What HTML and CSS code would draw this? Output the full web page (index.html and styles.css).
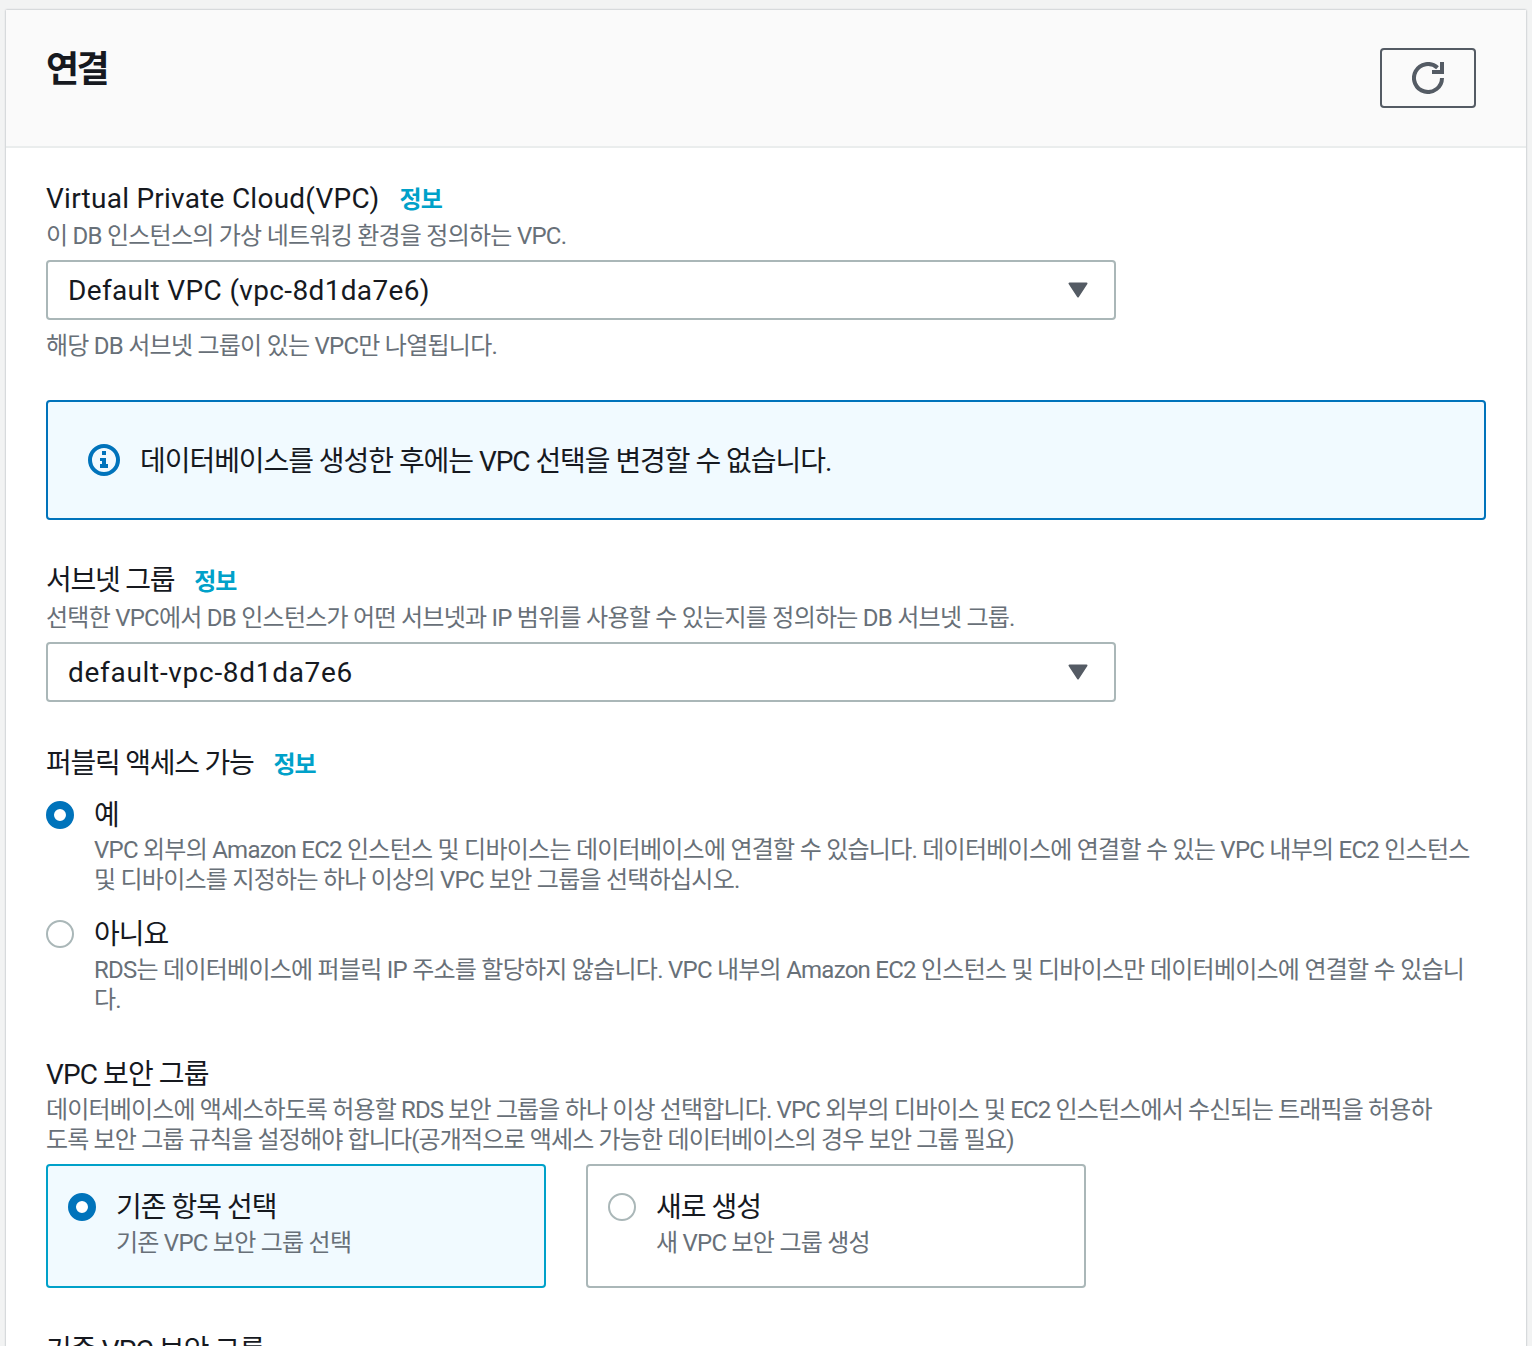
FILE: index.html
```html
<!DOCTYPE html>
<html lang="ko">
<head>
<meta charset="utf-8">
<title>연결</title>
<link rel="stylesheet" href="styles.css">
</head>
<body>
<section class="panel">
  <header class="panel-header">
    <h2 class="panel-title">연결</h2>
    <button class="refresh" type="button" aria-label="새로 고침">
      <svg width="32" height="32" viewBox="0 0 32 32" fill="none">
        <path d="M30 16A14 14 0 1 1 25.500 5.700" stroke="#545b64" stroke-width="4"/>
        <path d="M20 10H30V0" stroke="#545b64" stroke-width="4"/>
      </svg>
    </button>
  </header>
  <div class="panel-body">
    <div class="field f-vpc">
      <div class="label latin">Virtual Private Cloud(VPC)<a class="info">정보</a></div>
      <p class="desc">이 DB 인스턴스의 가상 네트워킹 환경을 정의하는 VPC.</p>
      <div class="select"><span>Default VPC (vpc-8d1da7e6)</span><svg class="caret" width="20" height="16" viewBox="0 0 20 16"><path d="M1.500 1.500H18.500L10 14.500Z" fill="#545b64" stroke="#545b64" stroke-width="2" stroke-linejoin="round"/></svg></div>
      <p class="desc hint">해당 DB 서브넷 그룹이 있는 VPC만 나열됩니다.</p>
    </div>

    <div class="alert">
      <svg width="32" height="32" viewBox="0 0 32 32" fill="none">
        <circle cx="16" cy="16" r="14" stroke="#0073bb" stroke-width="4"/>
        <rect x="14" y="7" width="4" height="4" fill="#0073bb"/>
        <path d="M12 14H18V20H20V24H12V20H14V17H12Z" fill="#0073bb"/>
      </svg>
      <span class="alert-text">데이터베이스를 생성한 후에는 VPC 선택을 변경할 수 없습니다.</span>
    </div>

    <div class="field f-subnet">
      <div class="label">서브넷 그룹<a class="info">정보</a></div>
      <p class="desc">선택한 VPC에서 DB 인스턴스가 어떤 서브넷과 IP 범위를 사용할 수 있는지를 정의하는 DB 서브넷 그룹.</p>
      <div class="select"><span>default-vpc-8d1da7e6</span><svg class="caret" width="20" height="16" viewBox="0 0 20 16"><path d="M1.500 1.500H18.500L10 14.500Z" fill="#545b64" stroke="#545b64" stroke-width="2" stroke-linejoin="round"/></svg></div>
    </div>

    <div class="field f-public">
      <div class="label">퍼블릭 액세스 가능<a class="info">정보</a></div>
      <div class="radio-row first">
        <span class="radio on"></span>
        <div class="radio-text">
          <div class="radio-label">예</div>
          <p class="desc">VPC 외부의 Amazon EC2 인스턴스 및 디바이스는 데이터베이스에 연결할 수 있습니다. 데이터베이스에 연결할 수 있는 VPC 내부의 EC2 인스턴스 및 디바이스를 지정하는 하나 이상의 VPC 보안 그룹을 선택하십시오.</p>
        </div>
      </div>
      <div class="radio-row second">
        <span class="radio"></span>
        <div class="radio-text">
          <div class="radio-label">아니요</div>
          <p class="desc">RDS는 데이터베이스에 퍼블릭 IP 주소를 할당하지 않습니다. VPC 내부의 Amazon EC2 인스턴스 및 디바이스만 데이터베이스에 연결할 수 있습니다.</p>
        </div>
      </div>
    </div>

    <div class="field f-sg">
      <div class="label mixed">VPC 보안 그룹</div>
      <p class="desc wide">데이터베이스에 액세스하도록 허용할 RDS 보안 그룹을 하나 이상 선택합니다. VPC 외부의 디바이스 및 EC2 인스턴스에서 수신되는 트래픽을 허용하도록 보안 그룹 규칙을 설정해야 합니다(공개적으로 액세스 가능한 데이터베이스의 경우 보안 그룹 필요)</p>
      <div class="tiles">
        <div class="tile selected">
          <span class="radio on"></span>
          <div class="radio-text">
            <div class="radio-label">기존 항목 선택</div>
            <p class="desc">기존 VPC 보안 그룹 선택</p>
          </div>
        </div>
        <div class="tile">
          <span class="radio"></span>
          <div class="radio-text">
            <div class="radio-label">새로 생성</div>
            <p class="desc">새 VPC 보안 그룹 생성</p>
          </div>
        </div>
      </div>
    </div>

    <div class="label mixed f-existing">기존 VPC 보안 그룹</div>
  </div>
</section>
</body>
</html>
```
FILE: styles.css
```css
html, body {
  height: 1346px;
  overflow: hidden;
}
body {
  margin: 0;
  padding: 10px 6px 0 6px;
  box-sizing: border-box;
  background: #f2f3f3;
  font-family: Roboto, "Noto Sans CJK KR", sans-serif;
  color: #16191f;
}
.panel {
  background: #fff;
  box-shadow: 0 0 2px rgba(0, 21, 41, 0.35);
  height: 1400px;
}
.panel-header {
  height: 138px;
  box-sizing: border-box;
  background: #fafafa;
  border-bottom: 2px solid #eaeded;
  display: flex;
  justify-content: space-between;
  padding: 38px 50px 0 40px;
}
.panel-title {
  margin: 2px 0 0;
  font-size: 36px;
  line-height: 40px;
  font-weight: 700;
  letter-spacing: -2.5px;
}
.refresh {
  width: 96px;
  height: 60px;
  background: transparent;
  border: 2px solid #545b64;
  border-radius: 4px;
  padding: 0;
  display: flex;
  align-items: center;
  justify-content: center;
}
.panel-body {
  padding: 0 40px;
}
.label {
  font-size: 28px;
  line-height: 42px;
  letter-spacing: -1.25px;
}
.label.latin {
  letter-spacing: 0.25px;
}
.label.mixed {
  letter-spacing: -0.9px;
}
.info {
  margin-left: 20px;
  font-size: 24px;
  font-weight: 700;
  color: #00a1c9;
  letter-spacing: -1px;
}
.desc {
  margin: 0;
  font-size: 24px;
  line-height: 30px;
  color: #687078;
  letter-spacing: -0.75px;
}
.desc.wide {
  max-width: 1390px;
  margin-top: -1px;
  letter-spacing: -0.85px;
}
.select {
  width: 1070px;
  height: 60px;
  box-sizing: border-box;
  border: 2px solid #aab7b8;
  border-radius: 4px;
  background: #fff;
  margin-top: 9px;
  padding: 0 26px 0 20px;
  display: flex;
  align-items: center;
  justify-content: space-between;
  font-size: 28px;
  letter-spacing: 0.35px;
}
.caret {
  display: block;
}
.hint {
  margin-top: 11px;
}
.f-vpc {
  padding-top: 30px;
}
.alert {
  margin-top: 39px;
  height: 120px;
  box-sizing: border-box;
  border: 2px solid #0073bb;
  border-radius: 4px;
  background: #f1faff;
  padding: 0 40px;
  display: flex;
  align-items: center;
  gap: 20px;
  font-size: 28px;
  letter-spacing: -1.05px;
}
.alert-text {
  padding-bottom: 2px;
}
.f-subnet {
  padding-top: 40px;
}
.f-subnet .select {
  letter-spacing: 0.7px;
}
.f-public {
  padding-top: 41px;
}
.radio-row {
  display: flex;
  gap: 20px;
}
.radio-row.first {
  margin-top: 8px;
}
.radio-row.second {
  margin-top: 18px;
}
.radio {
  flex: none;
  width: 28px;
  height: 28px;
  margin-top: 7px;
  box-sizing: border-box;
  border: 2px solid #aab7b8;
  border-radius: 50%;
  background: #fff;
}
.radio.on {
  border: 8px solid #0073bb;
}
.radio-label {
  font-size: 28px;
  padding-top: 2px;
  line-height: 40px;
  letter-spacing: -1px;
}
.first .radio-label {
  line-height: 39px;
}
.radio-text {
  max-width: 1380px;
}
.f-sg {
  padding-top: 39px;
}
.tiles {
  display: flex;
  gap: 40px;
  margin-top: 9px;
}
.tile {
  width: 500px;
  height: 124px;
  box-sizing: border-box;
  border: 2px solid #aab7b8;
  border-radius: 4px;
  padding: 20px 20px;
  display: flex;
  gap: 20px;
}
.tile.selected {
  border-color: #00a1c9;
  background: #f1faff;
}
.f-existing {
  margin-top: 42px;
}
```
